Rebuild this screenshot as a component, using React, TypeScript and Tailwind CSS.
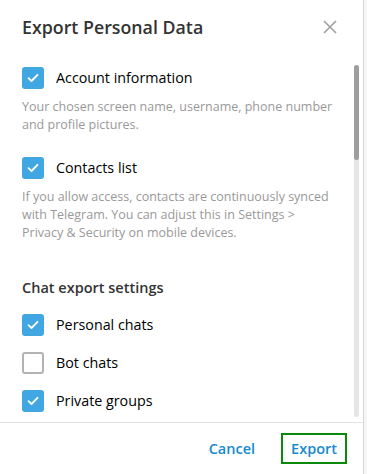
import React from "react";

const font = { fontFamily: '"Open Sans", "Noto Sans", sans-serif' };

function Check({ on }: { on: boolean }) {
    if (!on) {
        return <div className="w-[22px] h-[22px] shrink-0 rounded-[3px] border-2 border-[#b3b3b3] bg-white" />;
    }
    return (
        <div className="w-[22px] h-[22px] shrink-0 rounded-[3px] bg-[#40a7e3] flex items-center justify-center">
            <svg width="12" height="10" viewBox="0 0 12 10" fill="none">
                <path d="M1.5 5.2 L4.5 8 L10.5 1.8" stroke="white" strokeWidth="1.8" strokeLinecap="round" strokeLinejoin="round" />
            </svg>
        </div>
    );
}

function Option({ on, label }: { on: boolean; label: string }) {
    return (
        <div className="flex items-center gap-[12px]">
            <Check on={on} />
            <span className="text-[14.3px] leading-[20px] text-black">{label}</span>
        </div>
    );
}

export default function App() {
    return (
        <div className="w-[367px] h-[474px] flex bg-white overflow-hidden" style={font}>
            {/* dialog */}
            <div className="w-[364px] h-full flex flex-col bg-white border-r border-[#d6d6d6]">
                <div className="h-[55px] shrink-0 flex items-start justify-between pl-[22px] pr-[26px] pt-[14px]">
                    <h1 className="text-[17.8px] leading-[26px] font-semibold text-[#333]">Export Personal Data</h1>
                    <svg className="mt-[6px]" width="14" height="14" viewBox="0 0 14 14">
                        <path d="M1 1 L13 13 M13 1 L1 13" stroke="#a0a0a0" strokeWidth="1.6" />
                    </svg>
                </div>

                <div className="flex-1 flex min-h-0">
                    <div className="flex-1 overflow-hidden pl-[22px] pr-[14px] pt-[12px]">
                        <Option on label="Account information" />
                        <p className="mt-[9px] text-[12.5px] leading-[18px] text-[#999]">
                            Your chosen screen name, username, phone number and profile pictures.
                        </p>

                        <div className="mt-[23px]">
                            <Option on label="Contacts list" />
                        </div>
                        <p className="mt-[9px] text-[12.5px] leading-[18px] text-[#999]">
                            If you allow access, contacts are continuously synced with Telegram. You can adjust this in Settings &gt;
                            <br />
                            Privacy &amp; Security on mobile devices.
                        </p>

                        <h2 className="mt-[36px] text-[14.5px] leading-[20px] font-semibold text-[#333]">Chat export settings</h2>

                        <div className="mt-[16px] flex flex-col gap-[16px]">
                            <Option on label="Personal chats" />
                            <Option on={false} label="Bot chats" />
                            <Option on label="Private groups" />
                        </div>
                    </div>

                    {/* scrollbar */}
                    <div className="w-[5px] mr-[4px] pt-[10px] pb-[5px] flex flex-col">
                        <div className="flex-1 bg-[#e6e6e6] rounded-full flex flex-col">
                            <div className="h-[95px] bg-[#9e9e9e] rounded-full" />
                        </div>
                    </div>
                </div>

                <div className="h-[52px] shrink-0 border-t border-[#e3e3e3] flex items-center justify-end gap-[26px] pr-[16px]">
                    <button className="text-[14.5px] font-semibold text-[#168acd]">Cancel</button>
                    <button className="h-[31px] px-[8px] border-2 border-[#0a8a0a] text-[14.5px] font-semibold text-[#168acd]">Export</button>
                </div>
            </div>
            {/* backdrop strip */}
            <div className="flex-1 bg-[#f5f5f5]" />
        </div>
    );
}
